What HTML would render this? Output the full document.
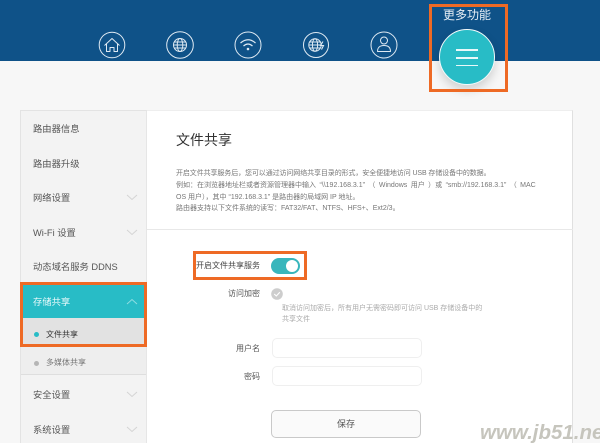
<!DOCTYPE html>
<html lang="zh">
<head>
<meta charset="utf-8">
<style>
*{box-sizing:border-box;margin:0;padding:0}
html,body{width:600px;height:443px;overflow:hidden;background:#f7f7f7}
body{position:relative;font-family:"Liberation Sans","Noto Sans CJK SC",sans-serif;color:#444}
.a{position:absolute;white-space:nowrap}
#hd{position:absolute;left:0;top:0;width:600px;height:61px;background:#0f5288}
.nav{position:absolute;left:20px;top:110px;width:127px;height:333px;background:#f3f3f3;border-left:1px solid #e3e3e3;border-top:1px solid #e3e3e3;border-right:1px solid #e6e6e6}
.main{position:absolute;left:147px;top:110px;width:426px;height:333px;background:#fff;border-right:1px solid #e0e0e0;border-top:1px solid #eee}
.ni{position:absolute;left:33px;font-size:9.300px;line-height:14px;color:#555;white-space:nowrap}
.d{font-size:7px;line-height:11.700px;color:#777;left:176px}
.lb{font-size:8px;line-height:12px;color:#555;text-align:right;right:340px}
.inp{position:absolute;left:272px;width:150px;height:20px;border:1px solid #efefef;border-radius:5px;background:#fff}
.box{position:absolute;border:3px solid #ee6a25}
</style>
</head>
<body>
<div id="hd"></div>
<svg class="a" style="left:0;top:0" width="600" height="100" fill="none" stroke="#dfeaf3" stroke-width="1">
<circle cx="112" cy="45" r="12.800"/>
<path d="M104.500 45.500 112 38.500 119.500 45.500M106.500 44V51.500H110V47.500H114V51.500H117.500V44" stroke-linejoin="round"/>
<circle cx="180" cy="45" r="13.300"/>
<circle cx="180" cy="45" r="6.500"/>
<ellipse cx="180" cy="45" rx="2.800" ry="6.500"/>
<path d="M173.500 45H186.500M174.500 42H185.500M174.500 48H185.500"/>
<circle cx="248" cy="45" r="13"/>
<path d="M240.500 43Q248 36.500 255.500 43M243.500 46Q248 42 252.500 46" stroke-width="1.200"/>
<circle cx="248" cy="49" r="1.300" fill="#dfeaf3" stroke="none"/>
<circle cx="316" cy="45" r="12.500"/>
<circle cx="315" cy="45" r="6.200"/>
<ellipse cx="315" cy="45" rx="2.600" ry="6.200"/>
<path d="M309 45H321M310 42H320M310 48H320"/>
<path d="M323 41.500 320.500 45.500H323.500L321.500 49.500" stroke-width="1.100"/>
<circle cx="384" cy="45" r="13"/>
<circle cx="384" cy="40.500" r="3.500"/>
<path d="M377.500 51.500C377.500 47 380 45.500 384 45.500S390.500 47 390.500 51.500Z" stroke-linejoin="round"/>
</svg>
<div class="a" style="left:443px;top:8px;font-size:12px;line-height:15px;color:#e6eef5">更多功能</div>
<div class="a" style="left:439px;top:29px;width:56px;height:56px;border-radius:50%;background:#28bcc6;border:1.500px solid #f2fafb;box-shadow:0 5px 10px rgba(0,0,0,.16)"></div>
<div class="a" style="left:456px;top:49px;width:22px;height:1.500px;background:#e8f8f9"></div>
<div class="a" style="left:456px;top:57px;width:22px;height:1.500px;background:#e8f8f9"></div>
<div class="a" style="left:456px;top:64.500px;width:22px;height:1.500px;background:#e8f8f9"></div>
<div class="box" style="left:429px;top:4px;width:79px;height:88px"></div>

<div class="nav"></div>
<div class="a" style="left:21px;top:283px;width:125px;height:35px;background:#28bcc6"></div>
<div class="a" style="left:21px;top:318px;width:125px;height:28px;background:#e2e2e2"></div>
<div class="a" style="left:21px;top:346px;width:125px;height:29px;background:#eeeeee;border-bottom:1px solid #dedede"></div>
<div class="ni" style="top:122px">路由器信息</div>
<div class="ni" style="top:157px">路由器升级</div>
<div class="ni" style="top:191px">网络设置</div>
<div class="ni" style="top:226px">Wi-Fi 设置</div>
<div class="ni" style="top:260px">动态域名服务 DDNS</div>
<div class="ni" style="top:295px;color:#e9f9fa">存储共享</div>
<div class="ni" style="top:388px">安全设置</div>
<div class="ni" style="top:423px">系统设置</div>
<div class="ni" style="left:46px;top:329px;font-size:8px;line-height:12px;color:#333">文件共享</div>
<div class="ni" style="left:46px;top:357px;font-size:8px;line-height:12px;color:#777">多媒体共享</div>
<div class="a" style="left:34px;top:332px;width:5px;height:5px;border-radius:50%;background:#28bcc6"></div>
<div class="a" style="left:34px;top:361px;width:5px;height:5px;border-radius:50%;background:#b5b5b5"></div>
<svg class="a" style="left:0;top:0" width="160" height="443" fill="none" stroke="#d4d4d4" stroke-width="1">
<path d="M127 195 132 199.500 137 195M127 230 132 234.500 137 230M127 392 132 396.500 137 392M127 427 132 431.500 137 427"/>
<path d="M127 304 132 299.500 137 304" stroke="#8fdde2"/>
</svg>
<div class="box" style="left:20px;top:282px;width:127px;height:65px"></div>

<div class="main"></div>
<div class="a" style="left:176px;top:130px;font-size:14px;line-height:20px;color:#333">文件共享</div>
<div class="a d" style="top:168px;letter-spacing:-.1px">开启文件共享服务后，您可以通过访问网络共享目录的形式，安全便捷地访问 USB 存储设备中的数据。</div>
<div class="a d" style="top:180px;word-spacing:1.500px">例如：在浏览器地址栏或者资源管理器中输入 “\\192.168.3.1” （ Windows 用户 ）或 “smb://192.168.3.1” （ MAC</div>
<div class="a d" style="top:191.500px">OS 用户），其中 “192.168.3.1” 是路由器的局域网 IP 地址。</div>
<div class="a d" style="top:203px">路由器支持以下文件系统的读写：FAT32/FAT、NTFS、HFS+、Ext2/3。</div>
<div class="a" style="left:147px;top:229px;width:426px;height:1px;background:#e8e8e8"></div>

<div class="a lb" style="top:260px;color:#444">开启文件共享服务</div>
<div class="a" style="left:271px;top:258px;width:29px;height:16px;border-radius:8px;background:#38b6bc"></div>
<div class="a" style="left:286px;top:260px;width:12px;height:12px;border-radius:50%;background:#fff"></div>
<div class="box" style="left:193px;top:251px;width:114px;height:29px"></div>
<div class="a lb" style="top:288px">访问加密</div>
<svg class="a" style="left:271px;top:288px" width="12" height="12"><circle cx="6" cy="6" r="5.800" fill="#cdcdcd"/><path d="M3.200 6 5.300 8 8.800 4.200" fill="none" stroke="#fff" stroke-width="1.100"/></svg>
<div class="a" style="left:282px;top:303px;font-size:7px;line-height:11px;color:#aaa">取消访问加密后，所有用户无需密码即可访问 USB 存储设备中的<br>共享文件</div>
<div class="a lb" style="top:343px">用户名</div>
<div class="inp" style="top:338px"></div>
<div class="a lb" style="top:371px">密码</div>
<div class="inp" style="top:366px"></div>
<div class="a" style="left:271px;top:410px;width:150px;height:28px;border:1px solid #c9c9c9;border-radius:5px;background:#fafafa;text-align:center;font-size:9px;line-height:26px;color:#555">保存</div>
<div class="a" style="left:480px;top:422px;font-size:20.500px;line-height:22px;font-weight:bold;font-style:italic;color:#c6c5bd">www.jb51.net</div>
</body>
</html>
